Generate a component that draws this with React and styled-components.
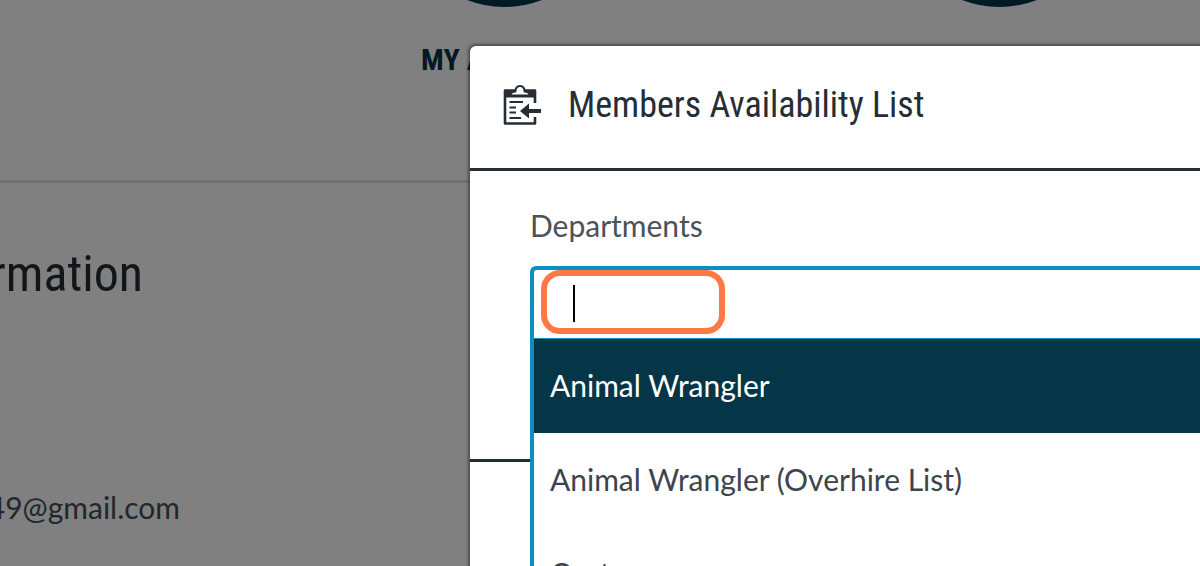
import React, { useState } from 'react';
import styled, { createGlobalStyle } from 'styled-components';

const departments = ['Animal Wrangler', 'Animal Wrangler (Overhire List)', 'Costume'];

const condensed = `"Roboto Condensed", "Liberation Sans Narrow", sans-serif`;

const GlobalStyle = createGlobalStyle`
    * {
        box-sizing: border-box;
    }
    body {
        margin: 0;
        background: #808080;
        color: #2f3943;
        font-family: Lato, "Liberation Sans", sans-serif;
        font-size: 30px;
        font-weight: 400;
        line-height: 40px;
    }
`;

const Page = styled.div`
    position: relative;
    height: 100vh;
    overflow: hidden;
`;

const Shortcuts = styled.nav`
    display: flex;
    gap: 288px;
    margin-top: -200px;
    padding-left: 401px;
    height: 380px;
`;

const Shortcut = styled.a`
    display: flex;
    flex-direction: column;
    align-items: center;
    flex: none;
    gap: 33px;
    width: 207px;
    font-family: ${condensed};
    font-size: 30px;
    font-weight: 700;
    color: #021a23;
    text-decoration: none;
    white-space: nowrap;
`;

const Disc = styled.span`
    width: 207px;
    height: 207px;
    border-radius: 50%;
    background: #021a23;
`;

const Profile = styled.section`
    border-top: 3px solid #727272;
    padding-top: 61px;
`;

const ProfileTitle = styled.h2`
    display: flex;
    justify-content: flex-end;
    width: 143px;
    margin: 0 0 183px;
    font-family: ${condensed};
    font-size: 50px;
    font-weight: 400;
    line-height: 60px;
    color: #12161a;
`;

const Email = styled.div`
    display: flex;
    justify-content: flex-end;
    width: 180px;
    color: #20272d;
`;

const Overlay = styled.div`
    position: absolute;
    inset: 0;
    display: flex;
    padding: 46px 0 0 470px;
`;

const Dialog = styled.div`
    flex: 1;
    background: #fff;
    border-top-left-radius: 6px;
    box-shadow: 0 0 3px 2px rgba(0, 0, 0, 0.4);
`;

const DialogHeader = styled.header`
    display: flex;
    align-items: center;
    gap: 26px;
    height: 125px;
    padding: 0 32px 4px;
    border-bottom: 3px solid #252d35;
`;

const DialogTitle = styled.h1`
    margin: 0;
    font-family: ${condensed};
    font-size: 36px;
    font-weight: 400;
    color: #252d35;
`;

const DialogBody = styled.div`
    height: 291px;
    padding: 34px 0 0 60px;
    border-bottom: 3px solid #252d35;
`;

const Label = styled.label`
    display: block;
    margin-bottom: 21px;
    color: #4b5259;
`;

const Combo = styled.div`
    position: relative;
    border: 4px solid #0a8fc0;
    border-right: 0;
    border-bottom: 0;
    border-top-left-radius: 6px;
    background: #fff;
`;

const ComboInput = styled.input`
    display: block;
    width: 100%;
    height: 68px;
    padding: 0 40px;
    border: 0;
    outline: 0;
    background: transparent;
    font: inherit;
    color: inherit;
`;

const Caret = styled.span`
    position: absolute;
    top: 15px;
    left: 39px;
    width: 2px;
    height: 37px;
    background: #000;
`;

const Highlight = styled.span`
    position: absolute;
    top: 0;
    left: 7px;
    width: 184px;
    height: 64px;
    border: 6px solid #ff7846;
    border-radius: 19px;
    pointer-events: none;
`;

const Options = styled.ul`
    position: absolute;
    top: 100%;
    left: -4px;
    right: 0;
    margin: 0;
    padding: 0;
    list-style: none;
    border-left: 4px solid #0a8fc0;
    border-top: 1px solid #0a8fc0;
    background: #fff;
`;

const Option = styled.li`
    height: 94px;
    padding: 26px 16px;
    white-space: nowrap;
    color: ${({$active}) => $active ? '#fff' : '#3d444b'};
    background: ${({$active}) => $active ? '#053647' : '#fff'};
`;

const ClipboardIcon = () => (
    <svg width="40" height="42" viewBox="0 0 40 42" fill="none" stroke="#252d35" strokeWidth="2.600" aria-hidden="true">
        <path d="M33 19V6.500H3V39.500h30V33" strokeLinejoin="round" />
        <path d="M3 12.500H33" strokeWidth="2" />
        <path d="M2 6h9.500v2l-3.500 4.500H2zM34 6h-9.500v2l3.500 4.500h6z" fill="#252d35" stroke="none" />
        <path d="M8.500 11.500c0-3 2-4 5-4 0-4 1.500-5.500 4.500-5.500s4.500 1.500 4.500 5.500c3 0 5 1 5 4z" fill="#fff" strokeWidth="2" strokeLinejoin="round" />
        <path d="M7.500 18h13.500M7.500 23.500h6.500M7.500 28.500h6.500M7.500 34h11.500" strokeWidth="2.200" />
        <path d="M18 27l9-7.500v5.500h12v4H27v5.500z" fill="#252d35" stroke="none" />
    </svg>
);

const App = () => {
    const [search, setSearch] = useState('');
    const [active, setActive] = useState(0);
    return (
        <>
            <GlobalStyle />
            <Page>
                <Shortcuts>
                    <Shortcut href="#account"><Disc />MY ACCOUNT</Shortcut>
                    <Shortcut href="#members" aria-label="Members"><Disc /></Shortcut>
                </Shortcuts>
                <Profile>
                    <ProfileTitle>Information</ProfileTitle>
                    <Email>49@gmail.com</Email>
                </Profile>
                <Overlay>
                    <Dialog role="dialog" aria-labelledby="dialog-title">
                        <DialogHeader>
                            <ClipboardIcon />
                            <DialogTitle id="dialog-title">Members Availability List</DialogTitle>
                        </DialogHeader>
                        <DialogBody>
                            <Label htmlFor="departments">Departments</Label>
                            <Combo>
                                <ComboInput id="departments" value={search} onChange={(e) => setSearch(e.target.value)} />
                                {search === '' && <Caret />}
                                <Highlight />
                                <Options role="listbox">
                                    {departments.map((name, index) => (
                                        <Option
                                            key={name}
                                            role="option"
                                            aria-selected={index === active}
                                            $active={index === active}
                                            onMouseEnter={() => setActive(index)}
                                        >
                                            {name}
                                        </Option>
                                    ))}
                                </Options>
                            </Combo>
                        </DialogBody>
                    </Dialog>
                </Overlay>
            </Page>
        </>
    );
};

export default App;
